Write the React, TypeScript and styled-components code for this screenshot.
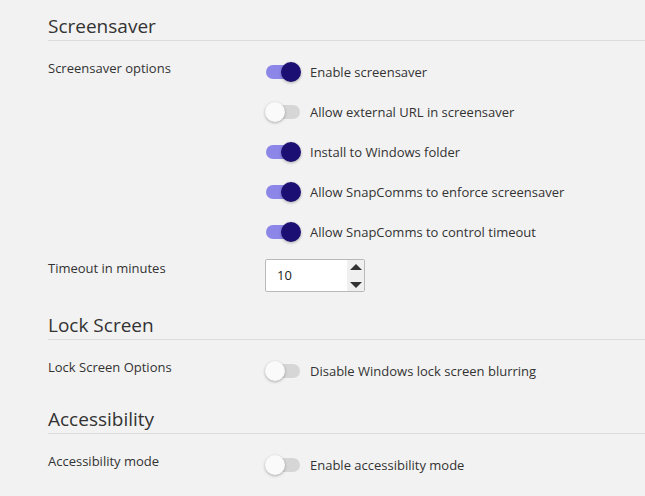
import React, { useState } from 'react';
import styled, { createGlobalStyle } from 'styled-components';

const GlobalStyle = createGlobalStyle`
  body {
    margin: 0;
    background: #f2f2f2;
    font-family: "Open Sans", "Noto Sans", sans-serif;
    color: #333;
  }
`;

const Page = styled.div`
  padding: 12px 0 0 48px;
  overflow: hidden;
`;

const Section = styled.section`
  margin-bottom: 14px;
`;

const SectionTitle = styled.h2`
  margin: 0 0 11px;
  font-size: 19px;
  font-weight: 400;
  line-height: 28px;
  color: #333;
  border-bottom: 1px solid #dcdcdc;
`;

const SettingRow = styled.div`
  display: grid;
  grid-template-columns: 218px 1fr;
  align-items: start;
`;

const SettingLabel = styled.div`
  font-size: 13px;
  line-height: 20px;
  padding-top: 6px;
`;

const Controls = styled.div`
  display: flex;
  flex-direction: column;
`;

const ToggleRow = styled.label`
  display: flex;
  align-items: center;
  height: 40px;
  gap: 10px;
  font-size: 13px;
  cursor: pointer;
`;

const Track = styled.span<{ $on: boolean }>`
  position: relative;
  width: 34px;
  height: 14px;
  border-radius: 7px;
  background: ${({ $on }) => ($on ? '#8c86e8' : '#d6d6d6')};
  flex: none;
`;

const Thumb = styled.span<{ $on: boolean }>`
  position: absolute;
  top: -3px;
  left: ${({ $on }) => ($on ? '15px' : '-1px')};
  width: 20px;
  height: 20px;
  border-radius: 50%;
  background: ${({ $on }) => ($on ? '#1b0f73' : '#fafafa')};
  box-shadow: 0 1px 3px rgba(0, 0, 0, 0.3);
`;

const NumberBox = styled.div`
  display: flex;
  width: 98px;
  height: 31px;
  margin: 7px 0 5px -1px;
  border: 1px solid #b9b9b9;
  border-radius: 2px;
  background: #fff;
`;

const NumberValue = styled.span`
  flex: 1;
  padding-left: 11px;
  font-size: 13px;
  line-height: 31px;
  color: #222;
`;

const Spinner = styled.div`
  width: 17px;
  display: flex;
  flex-direction: column;
  justify-content: space-between;
  align-items: center;
  padding: 4px 0 3px;
  background: #f0f0f0;
`;

const Arrow = styled.span<{ $up?: boolean }>`
  width: 0;
  height: 0;
  border-left: 6px solid transparent;
  border-right: 6px solid transparent;
  ${({ $up }) => ($up ? 'border-bottom: 6px solid #333;' : 'border-top: 6px solid #333;')}
`;

const Toggle: React.FC<{ label: string; initial: boolean }> = ({ label, initial }) => {
  const [on, setOn] = useState(initial);
  return (
    <ToggleRow onClick={() => setOn(!on)}>
      <Track $on={on}>
        <Thumb $on={on} />
      </Track>
      {label}
    </ToggleRow>
  );
};

export default function App() {
  return (
    <>
      <GlobalStyle />
      <Page>
        <Section>
          <SectionTitle>Screensaver</SectionTitle>
          <SettingRow>
            <SettingLabel>Screensaver options</SettingLabel>
            <Controls>
              <Toggle label="Enable screensaver" initial />
              <Toggle label="Allow external URL in screensaver" initial={false} />
              <Toggle label="Install to Windows folder" initial />
              <Toggle label="Allow SnapComms to enforce screensaver" initial />
              <Toggle label="Allow SnapComms to control timeout" initial />
            </Controls>
          </SettingRow>
          <SettingRow>
            <SettingLabel>Timeout in minutes</SettingLabel>
            <NumberBox>
              <NumberValue>10</NumberValue>
              <Spinner>
                <Arrow $up />
                <Arrow />
              </Spinner>
            </NumberBox>
          </SettingRow>
        </Section>

        <Section>
          <SectionTitle>Lock Screen</SectionTitle>
          <SettingRow>
            <SettingLabel>Lock Screen Options</SettingLabel>
            <Controls>
              <Toggle label="Disable Windows lock screen blurring" initial={false} />
            </Controls>
          </SettingRow>
        </Section>

        <Section>
          <SectionTitle>Accessibility</SectionTitle>
          <SettingRow>
            <SettingLabel>Accessibility mode</SettingLabel>
            <Controls>
              <Toggle label="Enable accessibility mode" initial={false} />
            </Controls>
          </SettingRow>
        </Section>
      </Page>
    </>
  );
}
